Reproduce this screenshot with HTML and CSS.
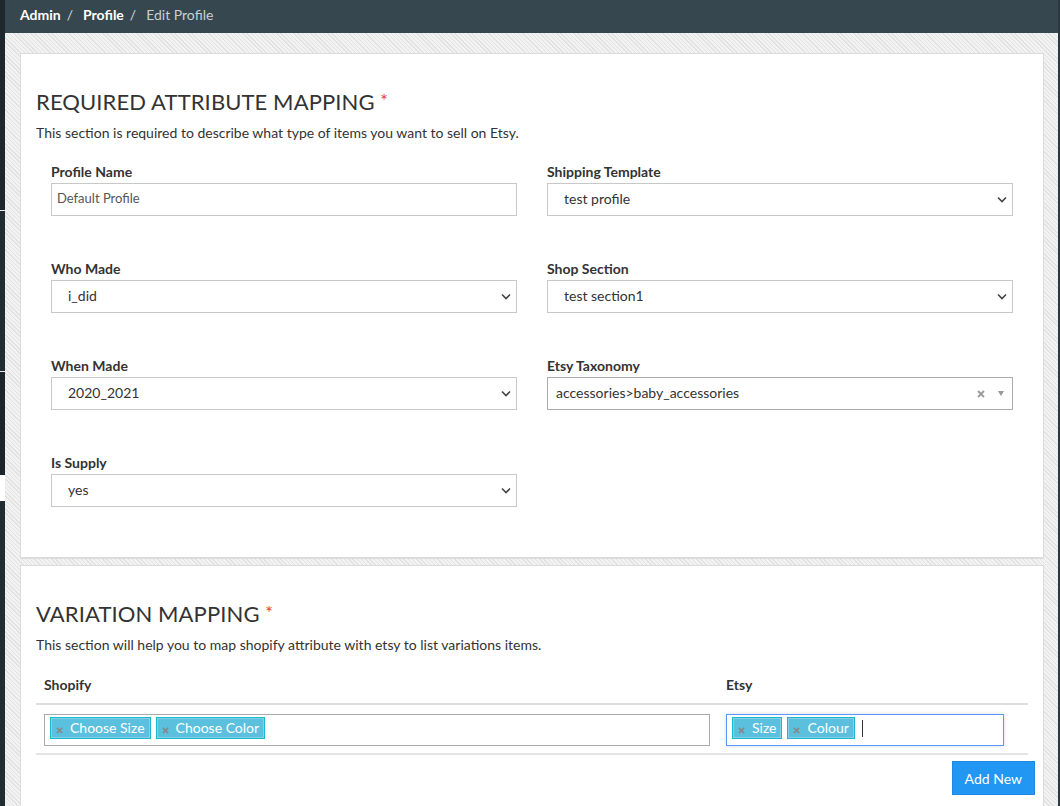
FILE: index.html
```html
<!DOCTYPE html>
<html>
<head>
<meta charset="utf-8">
<link rel="stylesheet" href="styles.css">
</head>
<body>
<div class="app">
  <aside class="side">
    <div class="seg s1"></div>
    <div class="seg s2"></div>
    <div class="seg s3"></div>
    <div class="seg s4"></div>
    <div class="seg s5"></div>
  </aside>
  <div class="main">
    <header class="topbar">
      <span class="crumb">Admin</span><span class="sep">/</span>
      <span class="crumb">Profile</span><span class="sep">/</span>
      <span class="crumb cur">Edit Profile</span>
    </header>
    <div class="content">
      <section class="card card1">
        <h2 class="title">REQUIRED ATTRIBUTE MAPPING <span class="req">*</span></h2>
        <p class="desc">This section is required to describe what type of items you want to sell on Etsy.</p>
        <div class="grid">
          <div class="field">
            <label>Profile Name</label>
            <div class="input text">Default Profile</div>
          </div>
          <div class="field">
            <label>Shipping Template</label>
            <div class="input select">test profile<svg class="chev" viewBox="0 0 10 6"><path d="M1 1l4 4 4-4" fill="none" stroke="#444" stroke-width="1.6"/></svg></div>
          </div>
          <div class="field">
            <label>Who Made</label>
            <div class="input select">i_did<svg class="chev" viewBox="0 0 10 6"><path d="M1 1l4 4 4-4" fill="none" stroke="#444" stroke-width="1.6"/></svg></div>
          </div>
          <div class="field">
            <label>Shop Section</label>
            <div class="input select">test section1<svg class="chev" viewBox="0 0 10 6"><path d="M1 1l4 4 4-4" fill="none" stroke="#444" stroke-width="1.6"/></svg></div>
          </div>
          <div class="field">
            <label>When Made</label>
            <div class="input select">2020_2021<svg class="chev" viewBox="0 0 10 6"><path d="M1 1l4 4 4-4" fill="none" stroke="#444" stroke-width="1.6"/></svg></div>
          </div>
          <div class="field">
            <label>Etsy Taxonomy</label>
            <div class="input chosen">accessories&gt;baby_accessories<svg class="clear" viewBox="0 0 8 8"><path d="M1 1l6 6M7 1l-6 6" stroke="#999" stroke-width="1.8"/></svg><span class="tri"></span></div>
          </div>
          <div class="field">
            <label>Is Supply</label>
            <div class="input select">yes<svg class="chev" viewBox="0 0 10 6"><path d="M1 1l4 4 4-4" fill="none" stroke="#444" stroke-width="1.6"/></svg></div>
          </div>
        </div>
      </section>
      <section class="card card2">
        <h2 class="title">VARIATION MAPPING <span class="req">*</span></h2>
        <p class="desc">This section will help you to map shopify attribute with etsy to list variations items.</p>
        <table class="vtable">
          <thead>
            <tr><th class="c1">Shopify</th><th class="c2">Etsy</th></tr>
          </thead>
          <tbody>
            <tr>
              <td class="c1">
                <div class="tags">
                  <span class="tag"><svg class="x" viewBox="0 0 8 8"><path d="M1 1l6 6M7 1l-6 6" stroke="#888" stroke-width="1.8"/></svg>Choose Size</span>
                  <span class="tag"><svg class="x" viewBox="0 0 8 8"><path d="M1 1l6 6M7 1l-6 6" stroke="#888" stroke-width="1.8"/></svg>Choose Color</span>
                </div>
              </td>
              <td class="c2">
                <div class="tags focus">
                  <span class="tag"><svg class="x" viewBox="0 0 8 8"><path d="M1 1l6 6M7 1l-6 6" stroke="#888" stroke-width="1.8"/></svg>Size</span>
                  <span class="tag"><svg class="x" viewBox="0 0 8 8"><path d="M1 1l6 6M7 1l-6 6" stroke="#888" stroke-width="1.8"/></svg>Colour</span>
                  <span class="caret"></span>
                </div>
              </td>
            </tr>
          </tbody>
        </table>
        <div class="actions"><button class="btn">Add New</button></div>
      </section>
    </div>
  </div>
  <div class="edge"></div>
</div>
</body>
</html>
```
FILE: styles.css
```css
* { box-sizing: border-box; }
html, body { margin: 0; padding: 0; }
body {
  font-family: Lato, "Open Sans", sans-serif;
  color: #333;
  width: 1060px;
  height: 806px;
  overflow: hidden;
}
.app { display: flex; height: 806px; }
.side {
  width: 5px;
  flex: 0 0 5px;
  background: #222d32;
  display: flex;
  flex-direction: column;
}
.seg { background: #1e282c; }
.s1 { height: 210px; }
.s2 { height: 1px; background: #e8e8e8; }
.s3 { height: 160px; background: #222d32; }
.s4 { height: 104px; background: #1c2529; border-top: 1px solid #e8e8e8; }
.s5 { height: 26px; background: #ffffff; }
.main { flex: 1; display: flex; flex-direction: column; min-width: 0; }
.edge { width: 2px; flex: 0 0 2px; background: #2b3a42; }
.topbar {
  height: 33px;
  background: #37474f;
  color: #fff;
  font-size: 14px;
  padding: 0 0 4px 15px;
  display: flex;
  align-items: center;
}
.crumb { font-weight: 700; color: #fff; }
.crumb.cur { font-weight: 400; color: #c9d0d3; }
.sep { color: #d0d6d9; margin: 0 10px 0 6px; }
.content {
  flex: 1;
  background-color: #efefef;
  background-image: repeating-linear-gradient(45deg, #e2e2e2 0 1px, #f2f2f2 1px 3px);
  padding: 20px 14px 0 15px;
  display: flex;
  flex-direction: column;
  gap: 6px;
}
.card {
  background: #fff;
  border: 1px solid #dcdcdc;
  border-bottom-width: 2px;
  padding: 0 15px;
}
.card1 { height: 506px; padding-top: 33px; }
.card2 { flex: 1; padding-top: 33px; border-bottom: 0; }
.title {
  margin: 0;
  font-size: 22px;
  font-weight: 400;
  color: #333;
  letter-spacing: 0.1px;
  line-height: 26px;
}
.req { color: #e53935; font-size: 18px; vertical-align: 3px; }
.desc {
  margin: 9px 0 0;
  font-size: 14px;
  line-height: 17px;
  color: #333;
}
.grid {
  display: grid;
  grid-template-columns: 1fr 1fr;
  column-gap: 30px;
  row-gap: 44px;
  padding: 22px 15px 0;
}
.field label {
  display: block;
  font-size: 14px;
  font-weight: 700;
  color: #333;
  line-height: 17px;
  margin-bottom: 3px;
}
.input {
  height: 33px;
  border: 1px solid #c8c8c8;
  display: flex;
  align-items: center;
  padding-bottom: 3px;
  font-size: 14px;
  color: #333;
  position: relative;
}
.input.text { padding-left: 5px; font-size: 13px; color: #555; }
.input.select { padding-left: 16px; }
.chev { position: absolute; right: 5px; top: 12px; width: 10px; height: 7px; }
.input.chosen { padding-left: 8px; border-color: #aaa; }
.clear { position: absolute; right: 27px; top: 12px; width: 8px; height: 8px; }
.tri {
  position: absolute; right: 8px; top: 13px;
  border-left: 3px solid transparent; border-right: 3px solid transparent;
  border-top: 5px solid #999;
}
.vtable {
  width: 992px;
  border-collapse: collapse;
  margin-top: 12px;
}
.vtable th {
  text-align: left;
  font-size: 14px;
  font-weight: 700;
  color: #333;
  height: 39px;
  padding: 0 8px;
  border-bottom: 2px solid #ddd;
  vertical-align: middle;
}
.vtable td {
  padding: 9px 8px 7px;
  border-bottom: 2px solid #e4e4e4;
}
.vtable .c1 { width: 682px; }
.tags {
  height: 32px;
  border: 1px solid #aaa;
  display: flex;
  align-items: flex-start;
  gap: 5px;
  padding: 2px 4px 0 5px;
}
.tags.focus { border-color: #5897fb; box-shadow: 0 0 4px rgba(0,0,0,0.15); width: 278px; }
.tag {
  background: #5bc0de;
  border: 1px solid #17b8d0;
  box-shadow: inset 0 0 0 1px rgba(255,255,255,0.25);
  color: #fff;
  font-size: 14px;
  height: 22px;
  line-height: 20px;
  padding: 0 5px 0 5px;
  display: inline-flex;
  align-items: center;
}
.tag .x { width: 7px; height: 7px; margin-right: 7px; margin-top: 4px; }
.caret { width: 1px; height: 17px; background: #333; margin-left: 2px; margin-top: 3px; }
.actions { display: flex; justify-content: flex-end; margin-top: 6px; margin-right: -7px; }
.btn {
  background: #2196f3;
  border: 1px solid #1e88e5;
  color: #fff;
  font-family: Lato, sans-serif;
  font-size: 14px;
  height: 34px;
  padding: 0 12px;
  font-weight: 400;
}
```
